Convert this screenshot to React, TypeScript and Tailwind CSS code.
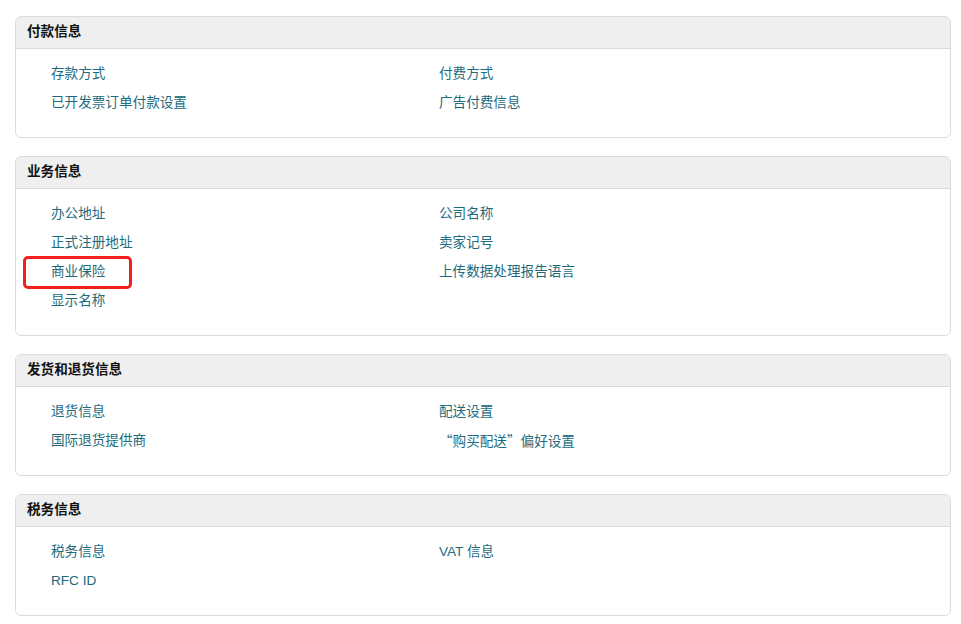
const sections = [
  {
    title: "付款信息",
    left: ["存款方式", "已开发票订单付款设置"],
    right: ["付费方式", "广告付费信息"],
  },
  {
    title: "业务信息",
    left: ["办公地址", "正式注册地址", "商业保险", "显示名称"],
    right: ["公司名称", "卖家记号", "上传数据处理报告语言"],
  },
  {
    title: "发货和退货信息",
    left: ["退货信息", "国际退货提供商"],
    right: ["配送设置", "“购买配送”偏好设置"],
  },
  {
    title: "税务信息",
    left: ["税务信息", "RFC ID"],
    right: ["VAT 信息"],
  },
];

// full-width quotes come from the CJK font, the rest stays in the base stack
function LinkText({ text }: { text: string }) {
  const parts = text.split(/([“”])/);
  return (
    <>
      {parts.map((part, i) =>
        part === "“" || part === "”" ? (
          <span key={i} className="font-['Noto_Sans_CJK_SC',sans-serif]">
            {part}
          </span>
        ) : (
          part
        )
      )}
    </>
  );
}

function LinkColumn({ items }: { items: string[] }) {
  return (
    <ul className="flex flex-col">
      {items.map((item) => (
        <li key={item} className="relative flex h-[29px] items-center">
          <a href="#" className="text-[13.6px] leading-[16px] text-[#1d6b7d] hover:underline">
            <LinkText text={item} />
          </a>
          {item === "商业保险" && (
            <span className="pointer-events-none absolute -left-[28px] -top-[1px] h-[33px] w-[109px] rounded-[5px] border-[3px] border-[#f2201c]" />
          )}
        </li>
      ))}
    </ul>
  );
}

export default function App() {
  return (
    <div
      className="flex w-[961px] flex-col gap-[18px] bg-white pb-[6px] pl-[15px] pr-[10px] pt-[16px]"
      style={{ fontFamily: '"Liberation Sans", "Noto Sans CJK SC", sans-serif' }}
    >
      {sections.map((section) => (
        <section
          key={section.title}
          className="overflow-hidden rounded-[6px] border border-[#dcdcdc] bg-white"
        >
          <div className="flex h-[32px] items-center border-b border-[#d9d9d9] bg-[#efefef] pl-[11px]">
            <h3 className="text-[13.6px] font-bold text-[#111]">{section.title}</h3>
          </div>
          <div className="grid grid-cols-[388px_1fr] pb-[20px] pl-[35px] pt-[10px]">
            <LinkColumn items={section.left} />
            <LinkColumn items={section.right} />
          </div>
        </section>
      ))}
    </div>
  );
}
